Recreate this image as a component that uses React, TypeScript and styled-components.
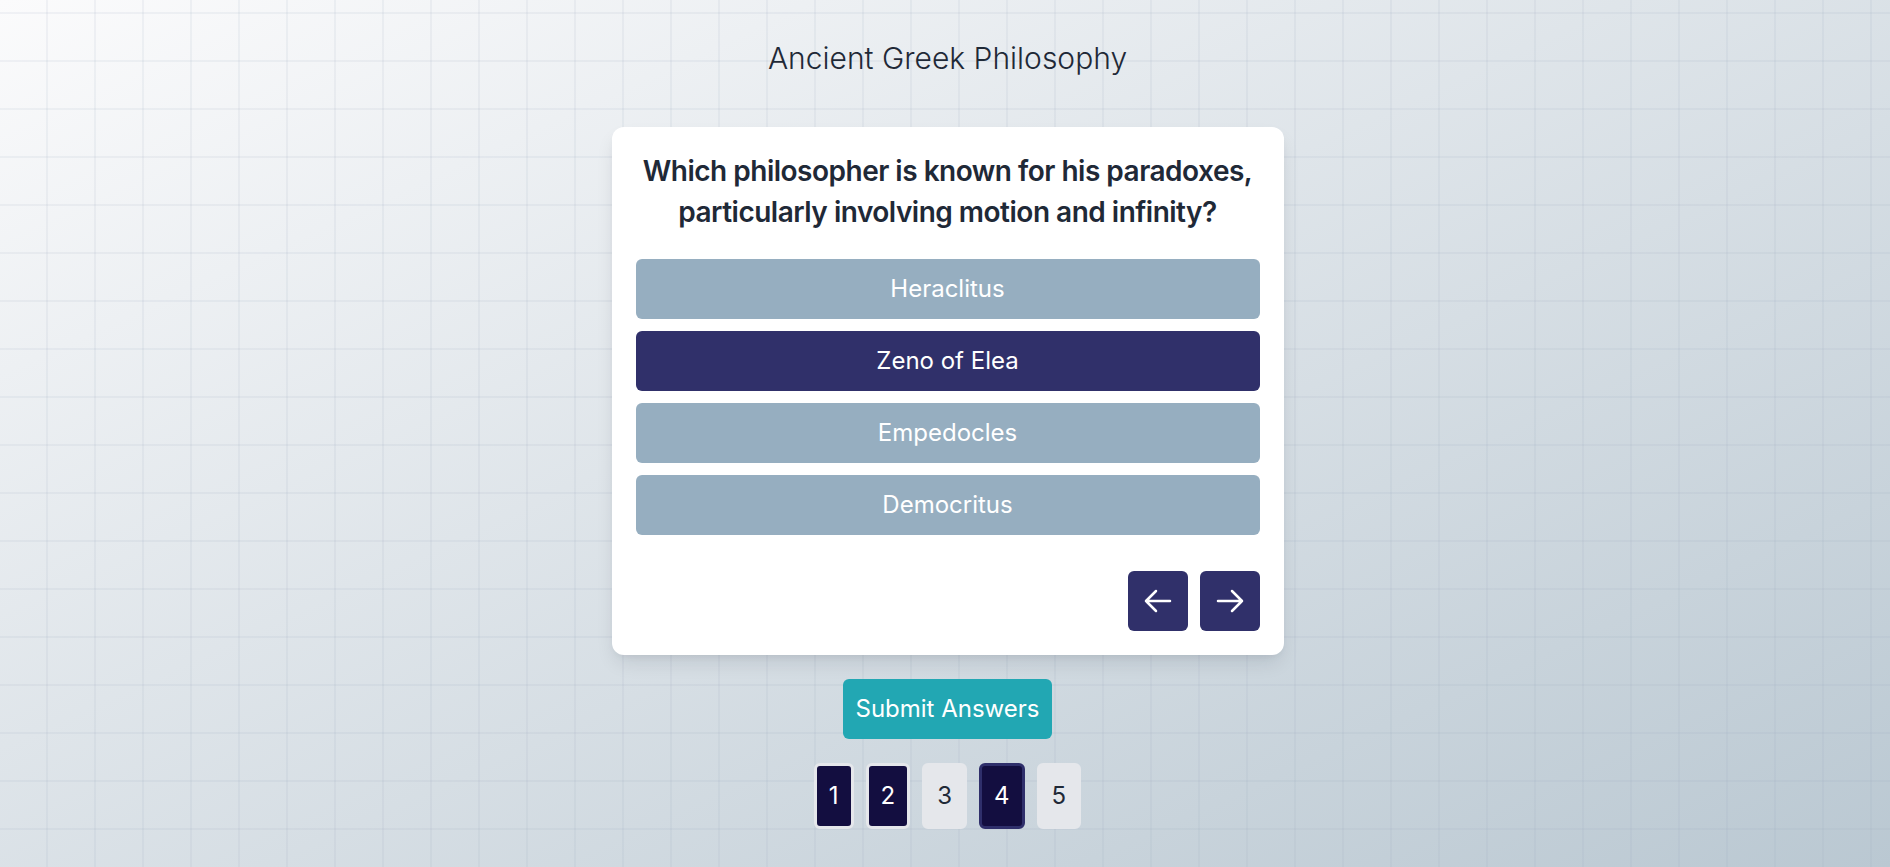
import React, { useState } from "react";
import styled, { createGlobalStyle } from "styled-components";

const GlobalStyle = createGlobalStyle`
  html, body {
    margin: 0;
    padding: 0;
  }
  body {
    font-family: Inter, "Noto Sans", "Liberation Sans", sans-serif;
    color: #1f2937;
  }
  * {
    box-sizing: border-box;
  }
`;

const Page = styled.div`
  min-height: 100vh;
  display: flex;
  flex-direction: column;
  align-items: center;
  padding: 40px 0 0 5px;
  background-color: #dbe2e7;
  background-image: linear-gradient(
      to right,
      rgba(148, 163, 184, 0.22) 1.5px,
      transparent 1.5px
    ),
    linear-gradient(to bottom, rgba(148, 163, 184, 0.22) 1.5px, transparent 1.5px),
    linear-gradient(to bottom right, #fbfbfc 0%, #bac8d2 100%);
  background-size: 48px 48px, 48px 48px, 100% 100%;
  background-position: 46.5px 12.5px, 46.5px 12.5px, 0 0;
`;

const Title = styled.h1`
  margin: 0 0 51px;
  font-size: 30px;
  line-height: 36px;
  font-weight: 300;
  color: #1f2937;
`;

const Card = styled.div`
  width: 672px;
  background: #ffffff;
  border-radius: 12px;
  padding: 24px;
  box-shadow: 0 10px 20px -4px rgba(15, 23, 42, 0.12),
    0 4px 8px -4px rgba(15, 23, 42, 0.08);
`;

const Question = styled.h2`
  margin: 0 0 26px;
  text-align: center;
  white-space: nowrap;
  font-size: 28px;
  line-height: 41px;
  letter-spacing: -0.5px;
  font-weight: 600;
  color: #1f2937;
`;

const Options = styled.div`
  display: flex;
  flex-direction: column;
  gap: 12px;
`;

const Option = styled.button<{ $selected: boolean }>`
  height: 60px;
  border: none;
  border-radius: 6px;
  font-family: inherit;
  font-size: 24px;
  line-height: 36px;
  color: #ffffff;
  cursor: pointer;
  background: ${(p) => (p.$selected ? "#30306a" : "#96aec0")};
`;

const NavRow = styled.div`
  display: flex;
  justify-content: flex-end;
  gap: 12px;
  margin-top: 36px;
`;

const NavButton = styled.button`
  width: 60px;
  height: 60px;
  border: none;
  border-radius: 6px;
  background: #30306a;
  display: flex;
  align-items: center;
  justify-content: center;
  cursor: pointer;
  padding: 0;
`;

const SubmitButton = styled.button`
  margin-top: 24px;
  height: 60px;
  padding: 0 12px;
  border: none;
  border-radius: 6px;
  background: #22a7b3;
  color: #ffffff;
  font-family: inherit;
  font-size: 24px;
  line-height: 36px;
  cursor: pointer;
`;

const Pager = styled.div`
  display: flex;
  gap: 12px;
  margin-top: 24px;
`;

const PageBox = styled.button<{ $answered: boolean; $current: boolean }>`
  height: 66px;
  padding: 12px;
  border-radius: 6px;
  border: 3px solid ${(p) => (p.$current ? "#2f2f6b" : "#e5e7eb")};
  background: ${(p) => (p.$answered ? "#130e40" : "#e5e7eb")};
  color: ${(p) => (p.$answered ? "#ffffff" : "#1f2937")};
  font-family: inherit;
  font-size: 24px;
  line-height: 36px;
  cursor: pointer;
`;

const Arrow = ({ dir }: { dir: "left" | "right" }) => (
  <svg
    width="32"
    height="32"
    viewBox="0 0 24 24"
    fill="none"
    stroke="#ffffff"
    strokeWidth="1.9"
    strokeLinecap="round"
    strokeLinejoin="round"
  >
    {dir === "left" ? (
      <path d="M10.5 19.5 3 12m0 0 7.5-7.5M3 12h18" />
    ) : (
      <path d="M13.5 4.5 21 12m0 0-7.5 7.5M21 12H3" />
    )}
  </svg>
);

const options = ["Heraclitus", "Zeno of Elea", "Empedocles", "Democritus"];

export default function App() {
  const [current, setCurrent] = useState(3);
  const [answers, setAnswers] = useState<(number | null)[]>([2, 0, null, 1, null]);

  const choose = (i: number) => {
    const next = [...answers];
    next[current] = i;
    setAnswers(next);
  };

  return (
    <>
      <GlobalStyle />
      <Page>
        <Title>Ancient Greek Philosophy</Title>
        <Card>
          <Question>
            Which philosopher is known for his paradoxes,
            <br />
            particularly involving motion and infinity?
          </Question>
          <Options>
            {options.map((opt, i) => (
              <Option
                key={opt}
                $selected={answers[current] === i}
                onClick={() => choose(i)}
              >
                {opt}
              </Option>
            ))}
          </Options>
          <NavRow>
            <NavButton onClick={() => setCurrent(Math.max(0, current - 1))}>
              <Arrow dir="left" />
            </NavButton>
            <NavButton onClick={() => setCurrent(Math.min(4, current + 1))}>
              <Arrow dir="right" />
            </NavButton>
          </NavRow>
        </Card>
        <SubmitButton>Submit Answers</SubmitButton>
        <Pager>
          {answers.map((a, i) => (
            <PageBox
              key={i}
              $answered={a !== null}
              $current={i === current}
              onClick={() => setCurrent(i)}
            >
              {i + 1}
            </PageBox>
          ))}
        </Pager>
      </Page>
    </>
  );
}
